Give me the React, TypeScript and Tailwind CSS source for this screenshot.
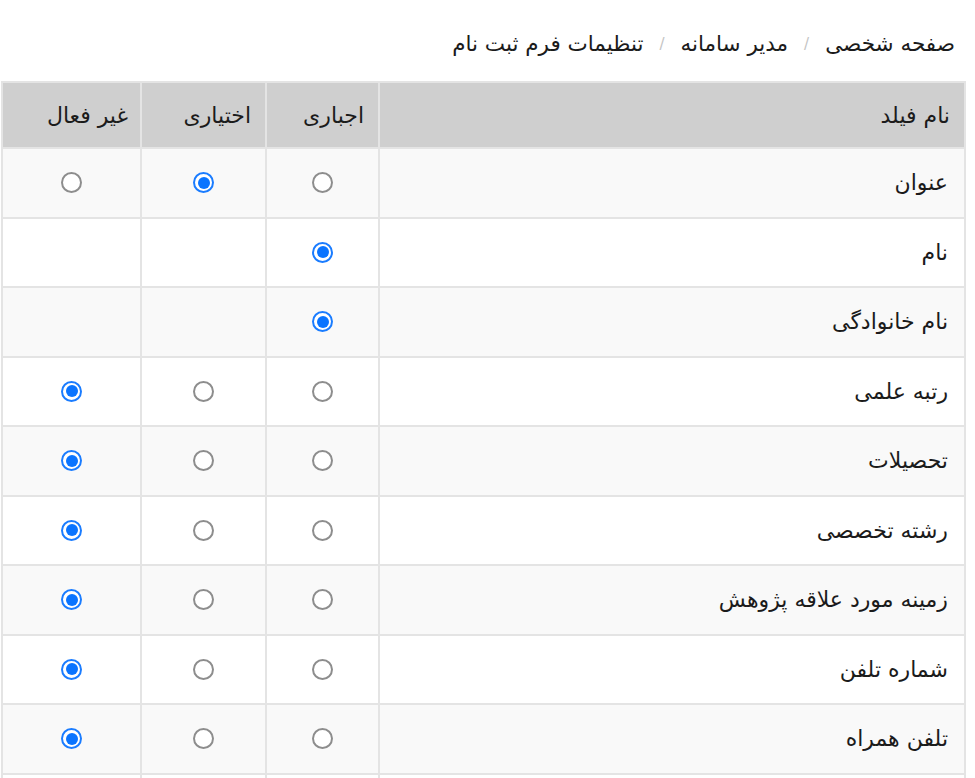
import React, { useState } from 'react';

type Choice = 'required' | 'optional' | 'disabled';

interface FieldRow {
  name: string;
  options: Choice[];
  value: Choice;
}

const initialRows: FieldRow[] = [
  { name: 'عنوان', options: ['required', 'optional', 'disabled'], value: 'optional' },
  { name: 'نام', options: ['required'], value: 'required' },
  { name: 'نام خانوادگی', options: ['required'], value: 'required' },
  { name: 'رتبه علمی', options: ['required', 'optional', 'disabled'], value: 'disabled' },
  { name: 'تحصیلات', options: ['required', 'optional', 'disabled'], value: 'disabled' },
  { name: 'رشته تخصصی', options: ['required', 'optional', 'disabled'], value: 'disabled' },
  { name: 'زمینه مورد علاقه پژوهش', options: ['required', 'optional', 'disabled'], value: 'disabled' },
  { name: 'شماره تلفن', options: ['required', 'optional', 'disabled'], value: 'disabled' },
  { name: 'تلفن همراه', options: ['required', 'optional', 'disabled'], value: 'disabled' },
  { name: 'پست الکترونیک', options: ['required', 'optional', 'disabled'], value: 'required' },
];

const columns: Choice[] = ['required', 'optional', 'disabled'];

const Radio: React.FC<{ checked: boolean; onClick: () => void }> = ({ checked, onClick }) => (
  <button
    type="button"
    onClick={onClick}
    className={
      checked
        ? 'w-[21px] h-[21px] rounded-full border-2 border-[#1a7cff] bg-white flex items-center justify-center'
        : 'w-[21px] h-[21px] rounded-full border-2 border-[#8d8d8d] bg-white'
    }
  >
    {checked && <span className="w-[12px] h-[12px] rounded-full bg-[#0a74ff]" />}
  </button>
);

const App: React.FC = () => {
  const [rows, setRows] = useState(initialRows);

  const setValue = (i: number, v: Choice) => {
    setRows((prev) => prev.map((r, idx) => (idx === i ? { ...r, value: v } : r)));
  };

  return (
    <div dir="rtl" className="bg-white min-h-screen text-[#1b1b1b] font-['DejaVu_Sans',sans-serif]">
      <nav className="flex items-center h-[81px] pr-[20px] pt-[7px] text-[21.5px]">
        <span>صفحه شخصی</span>
        <span className="text-[#c4c4c4] text-[15px] mx-[16px]">/</span>
        <span>مدیر سامانه</span>
        <span className="text-[#c4c4c4] text-[15px] mx-[16px]">/</span>
        <span>تنظیمات فرم ثبت نام</span>
      </nav>

      <table className="mr-[9px] ml-[3px] w-[963px] border-collapse text-[22px] table-fixed">
        <colgroup>
          <col className="w-[586px]" />
          <col className="w-[113px]" />
          <col className="w-[125px]" />
          <col className="w-[139px]" />
        </colgroup>
        <thead>
          <tr className="bg-[#cfcfcf] h-[66px]">
            <th className="border-2 border-[#e4e4e4] text-right font-normal pr-[14px]">نام فیلد</th>
            <th className="border-2 border-[#e4e4e4] text-right font-normal pr-[14px]">اجباری</th>
            <th className="border-2 border-[#e4e4e4] text-right font-normal pr-[14px]">اختیاری</th>
            <th className="border-2 border-[#e4e4e4] text-right font-normal pr-[12px]">غیر فعال</th>
          </tr>
        </thead>
        <tbody>
          {rows.map((row, i) => (
            <tr key={row.name} className={i % 2 === 0 ? 'bg-[#f9f9f9] h-[69.5px]' : 'bg-white h-[69.5px]'}>
              <td className="border-2 border-[#e4e4e4] text-right pr-[16px]">{row.name}</td>
              {columns.map((c) => (
                <td key={c} className="border-2 border-[#e4e4e4]">
                  {row.options.includes(c) && (
                    <div className="flex justify-center">
                      <Radio checked={row.value === c} onClick={() => setValue(i, c)} />
                    </div>
                  )}
                </td>
              ))}
            </tr>
          ))}
        </tbody>
      </table>
    </div>
  );
};

export default App;
